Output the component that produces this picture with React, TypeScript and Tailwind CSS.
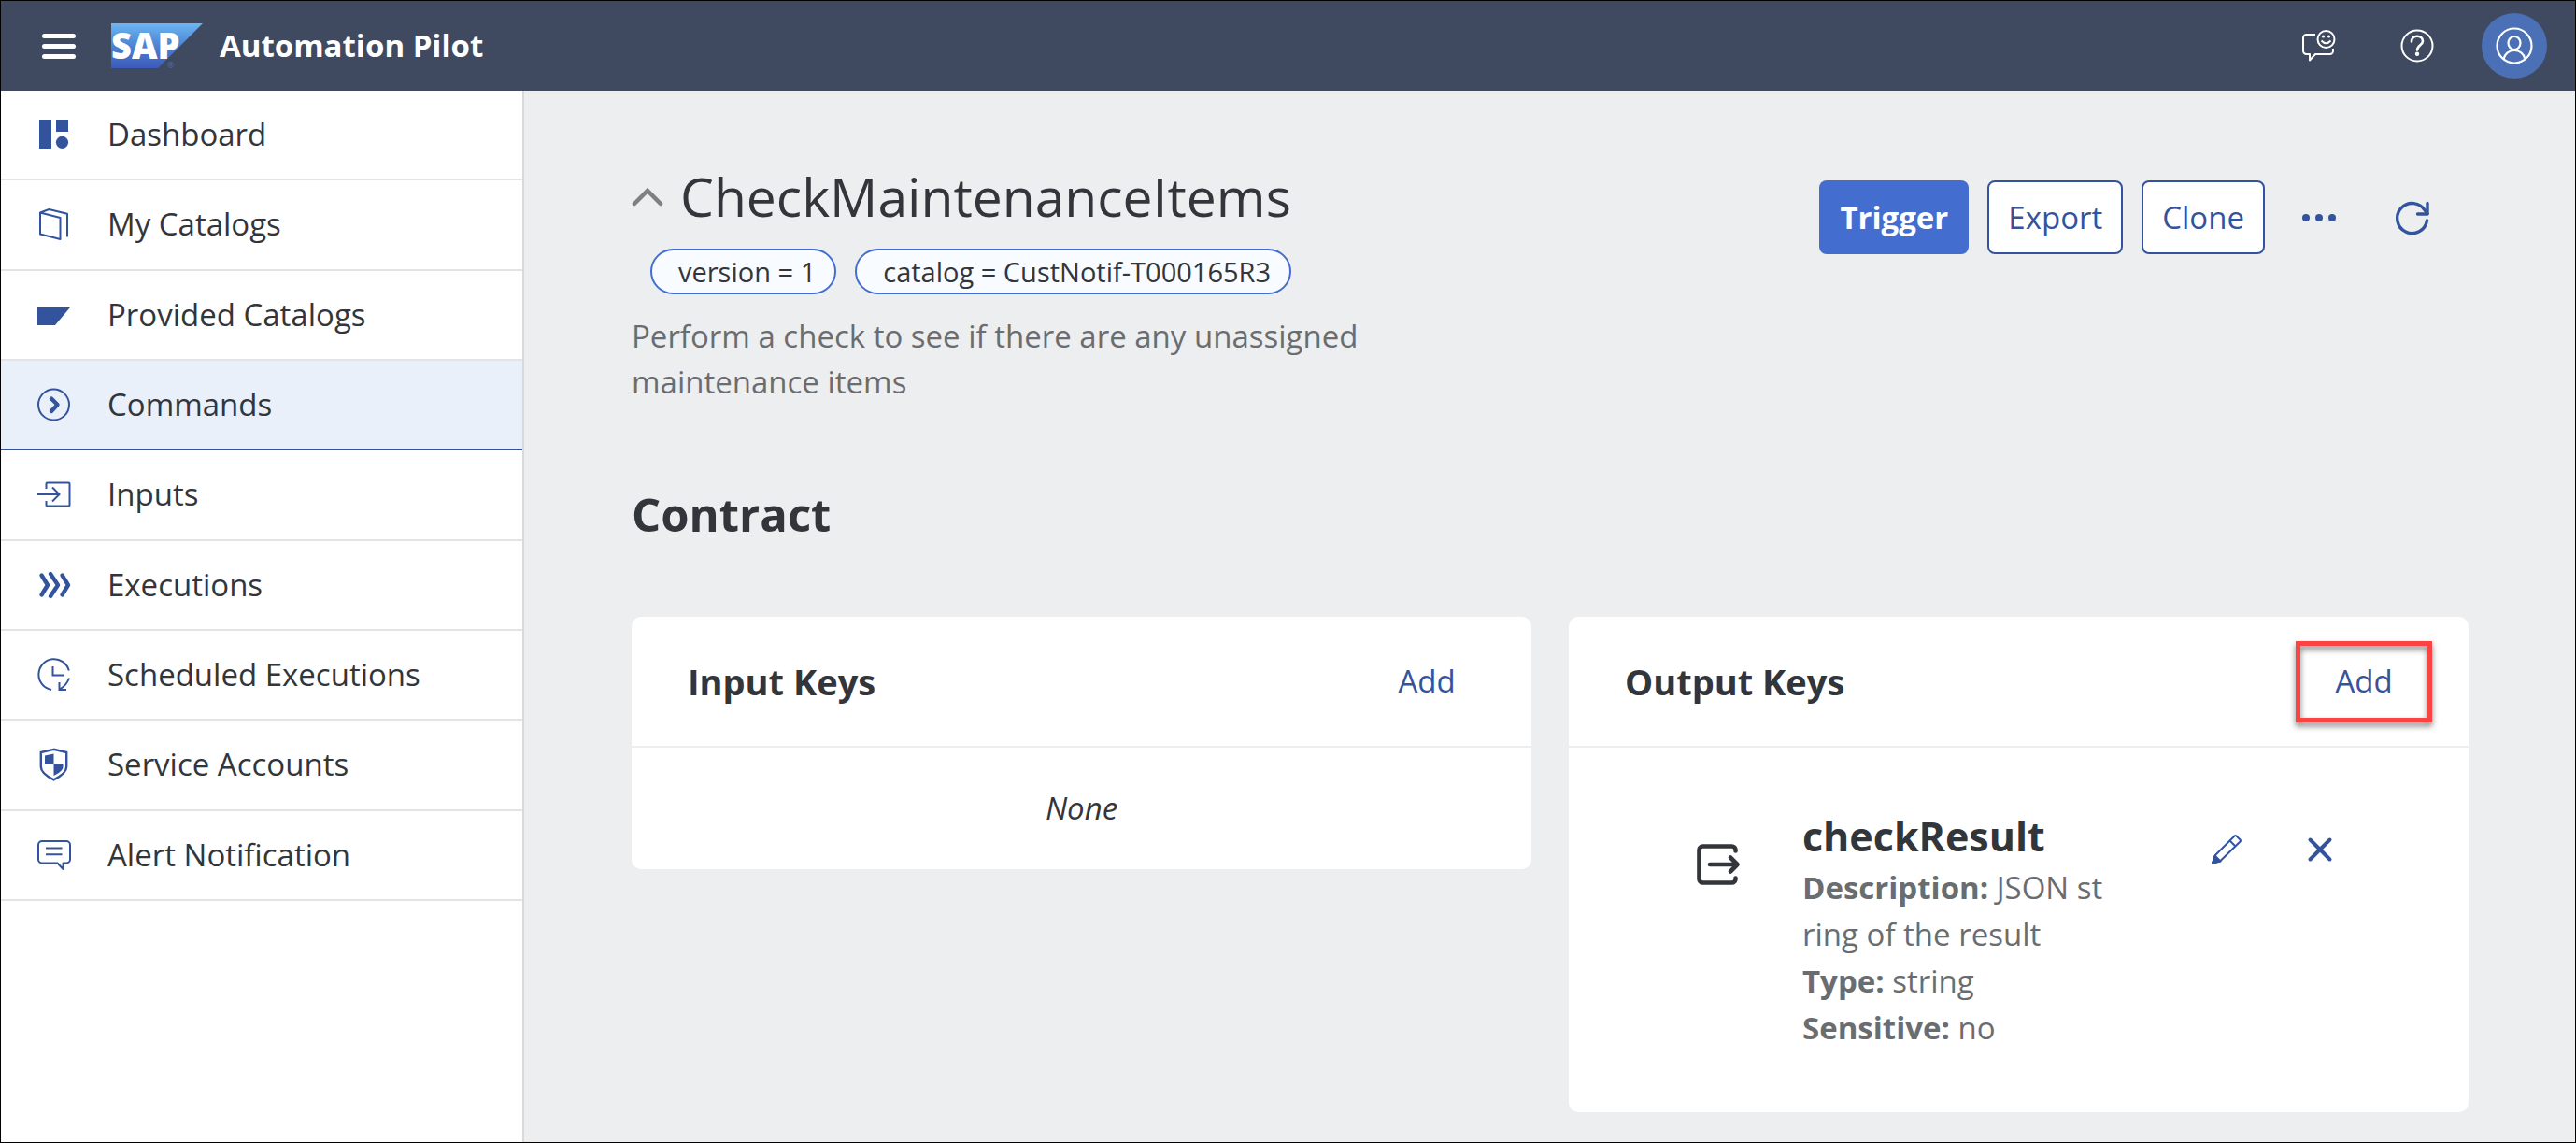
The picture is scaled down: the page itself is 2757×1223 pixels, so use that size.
import type { ReactNode } from "react";

function Icon({ children }: { children: ReactNode }) {
  return (
    <svg
      viewBox="0 0 36 36"
      className="h-9 w-9 shrink-0"
      fill="none"
      stroke="currentColor"
      strokeWidth="2"
      aria-hidden="true"
    >
      {children}
    </svg>
  );
}

const NAV: { label: string; active?: boolean; icon: ReactNode }[] = [
  {
    label: "Dashboard",
    icon: (
      <g fill="currentColor" stroke="none">
        <rect x="2" y="2" width="13" height="31" />
        <rect x="20" y="2" width="13" height="13" />
        <circle cx="26.5" cy="26.3" r="6.6" />
      </g>
    ),
  },
  {
    label: "My Catalogs",
    icon: <path d="M3 5.5 24.5 11v23L3 28.5ZM3 5.5 12.5 2 32 6.8v24.7" strokeLinejoin="round" />,
  },
  {
    label: "Provided Catalogs",
    icon: <path d="M0 10h35L19 29H0Z" fill="currentColor" stroke="none" />,
  },
  {
    label: "Commands",
    active: true,
    icon: (
      <>
        <circle cx="17.5" cy="18" r="16.5" />
        <path d="m15 11.5 6.5 6.5-6.5 7" strokeWidth="4.4" strokeLinecap="round" strokeLinejoin="round" />
      </>
    ),
  },
  {
    label: "Inputs",
    icon: (
      <>
        <path d="M9.5 12V6.5a1 1 0 0 1 1-1h23a1 1 0 0 1 1 1v23a1 1 0 0 1-1 1h-23a1 1 0 0 1-1-1V25" />
        <path d="M0 18h23M16 10.5l7.5 7.5-7.5 7.5" />
      </>
    ),
  },
  {
    label: "Executions",
    icon: (
      <path
        d="m4.500 7.500 6.500 10.500-6.500 10.500M14 6l8 12-8 12M26.500 7.500 33 18l-6.500 10.500"
        strokeWidth="4.4"
        strokeLinecap="round"
        strokeLinejoin="round"
      />
    ),
  },
  {
    label: "Scheduled Executions",
    icon: (
      <>
        <path d="M15 34A16.500 16.500 0 1 1 33.800 13.500" />
        <path d="M16.500 9v9.500H29" />
        <path d="M34 21.500q-2.500 7.500-10 12M23.500 26v8H31" />
      </>
    ),
  },
  {
    label: "Service Accounts",
    icon: (
      <>
        <path
          d="M17.500 1.800 3.800 5v15.500c0 6.500 7 10.500 13.700 13.800 6.700-3.300 13.700-7.300 13.700-13.800V5Z"
          strokeWidth="2.4"
        />
        <path d="M17.500 6.500v11H8V8.500ZM17.500 17.500h10v3c0 4-5 7-10 9.500Z" fill="currentColor" stroke="none" />
      </>
    ),
  },
  {
    label: "Alert Notification",
    icon: (
      <>
        <path
          d="M5 3h26a4 4 0 0 1 4 4v15.500a4 4 0 0 1-4 4h-3.500V33l-6-6.500H5a4 4 0 0 1-4-4V7a4 4 0 0 1 4-4Z"
          strokeLinejoin="round"
        />
        <path d="M9 10.500h17.500M9 17.200h17.500" />
      </>
    ),
  },
];

function SapLogo() {
  return (
    <svg viewBox="0 -4 98 56" className="h-14 w-[98px] shrink-0" role="img" aria-label="SAP">
      <defs>
        <linearGradient id="sap-gradient" x1="0" y1="0" x2="0" y2="1">
          <stop offset="0" stopColor="#6cb6f2" />
          <stop offset="0.5" stopColor="#4c83d2" />
          <stop offset="1" stopColor="#3c5abb" />
        </linearGradient>
      </defs>
      <path d="M0 0h98L50 48H0Z" fill="url(#sap-gradient)" />
      <text x="0" y="38" fontFamily="Open Sans, sans-serif" fontSize="38" fontWeight="800" fill="#fff">
        SAP
      </text>
      <text x="60" y="48" fontFamily="Open Sans, sans-serif" fontSize="9" fill="#4a6cc4">
        ®
      </text>
    </svg>
  );
}

function Card({ title, highlighted, children }: { title: string; highlighted?: boolean; children: ReactNode }) {
  return (
    <section className="rounded-[10px] bg-white">
      <div className="flex h-[140px] items-center justify-between border-b-2 border-[#edeeef] pr-[39px] pl-[60px]">
        <h3 className="text-[38px] leading-[52px] font-bold">{title}</h3>
        <button type="button" className="relative h-[87px] w-[146px] text-[33px] leading-[50px] text-[#33549c]">
          Add
          {highlighted && (
            <span className="absolute inset-0 border-5 border-[#fc4343] drop-shadow-[0_4px_3px_rgba(0,0,0,0.5)]" />
          )}
        </button>
      </div>
      {children}
    </section>
  );
}

function Chip({ children }: { children: ReactNode }) {
  return (
    <span className="rounded-full border-2 border-[#446dd0] bg-[#f8fbff] pr-5 pl-7 text-[29px] leading-[45px]">
      {children}
    </span>
  );
}

export default function App() {
  return (
    <div className="flex min-h-screen flex-col border border-black bg-[#edeef0] font-['Open_Sans',sans-serif] text-[#32363a]">
      <header className="flex h-24 items-center bg-[#3f4a60] pr-[30px] pl-11 text-white">
        <button type="button" aria-label="Menu" className="mr-[38px] flex w-9 flex-col gap-[6px]">
          <span className="h-[5px] rounded-full bg-white" />
          <span className="h-[5px] rounded-full bg-white" />
          <span className="h-[5px] rounded-full bg-white" />
        </button>
        <SapLogo />
        <h1 className="ml-[18px] text-[33px] leading-[50px] font-bold">Automation Pilot</h1>
        <div className="ml-auto flex items-center">
          <button type="button" aria-label="Feedback">
            <Icon>
              <path
                d="M14 6H4.500A3.500 3.500 0 0 0 1 9.500v14A3.500 3.500 0 0 0 4.500 27H8v6.500l6-6.500h15.500a3.500 3.500 0 0 0 3.500-3.500V21"
                strokeLinejoin="round"
              />
              <circle cx="25.5" cy="11" r="9" />
              <path d="M20.500 12.500q5 5.500 10 0" />
              <g fill="currentColor" stroke="none">
                <circle cx="22.5" cy="8" r="1.6" />
                <circle cx="28.5" cy="8" r="1.6" />
              </g>
            </Icon>
          </button>
          <button type="button" aria-label="Help" className="mr-[51px] ml-[69px]">
            <Icon>
              <circle cx="18" cy="18" r="16.5" />
              <path d="M12 13.500c0-7.500 12-7.500 12-.5 0 4-6 4.500-6 9.500" strokeWidth="2.6" strokeLinecap="round" />
              <circle cx="18" cy="26.8" r="2.2" fill="currentColor" stroke="none" />
            </Icon>
          </button>
          <button
            type="button"
            aria-label="User profile"
            className="flex h-[70px] w-[70px] items-center justify-center rounded-full bg-[#4b70b5]"
          >
            <svg viewBox="0 0 40 40" className="h-10 w-10" fill="none" stroke="currentColor" strokeWidth="2.2">
              <circle cx="20" cy="20" r="18.5" />
              <ellipse cx="20" cy="17" rx="6.5" ry="7" />
              <path d="M8.500 34.500c1-5.500 5.500-9.500 11.500-9.500s10.500 4 11.500 9.500" />
            </svg>
          </button>
        </div>
      </header>

      <div className="flex flex-1">
        <nav className="w-[560px] shrink-0 border-r-2 border-[#d9d9d9] bg-white">
          <ul className="grid h-[867px] auto-rows-fr">
            {NAV.map((item) => (
              <li key={item.label}>
                <a
                  href="#"
                  aria-current={item.active ? "page" : undefined}
                  className={`flex h-full items-center gap-[39px] border-b-2 pl-[39px] ${
                    item.active ? "border-[#33549c] bg-[#e9f0fa]" : "border-[#e4e4e4]"
                  }`}
                >
                  <span className="text-[#33549c]">
                    <Icon>{item.icon}</Icon>
                  </span>
                  <span className="text-[33px] leading-[50px]">{item.label}</span>
                </a>
              </li>
            ))}
          </ul>
        </nav>

        <main className="min-w-0 flex-1 pt-[78px] pr-[114px] pb-[30px] pl-[115px]">
          <div className="flex items-start justify-between">
            <div>
              <div className="flex items-center gap-[18px]">
                <button type="button" aria-label="Collapse" className="text-[#808080]">
                  <svg
                    viewBox="0 0 34 22"
                    className="h-[22px] w-[34px]"
                    fill="none"
                    stroke="currentColor"
                    strokeWidth="4.5"
                  >
                    <path d="M3 19 17 5l14 14" strokeLinecap="round" />
                  </svg>
                </button>
                <h2 className="text-[57px] leading-[70px]">CheckMaintenanceItems</h2>
              </div>
              <div className="mt-[21px] flex gap-5 pl-5">
                <Chip>version = 1</Chip>
                <Chip>catalog = CustNotif-T000165R3</Chip>
              </div>
              <p className="mt-5 max-w-[860px] text-[33px] leading-[49px] text-[#6a6d70]">
                Perform a check to see if there are any unassigned maintenance items
              </p>
            </div>
            <div className="mt-[18px] flex items-center gap-5 pr-[42px] text-[33px] leading-[50px] text-[#33549c]">
              <button type="button" className="h-[79px] rounded-[8px] bg-[#446dd0] px-[22px] font-bold text-white">
                Trigger
              </button>
              <button type="button" className="h-[79px] rounded-[8px] border-2 border-[#33549c] bg-white px-5">
                Export
              </button>
              <button type="button" className="h-[79px] rounded-[8px] border-2 border-[#33549c] bg-white px-5">
                Clone
              </button>
              <button type="button" aria-label="More" className="ml-5 flex gap-[6px]">
                <span className="h-2 w-2 rounded-full bg-[#33549c]" />
                <span className="h-2 w-2 rounded-full bg-[#33549c]" />
                <span className="h-2 w-2 rounded-full bg-[#33549c]" />
              </button>
              <button type="button" aria-label="Refresh" className="ml-11">
                <Icon>
                  <g strokeWidth="3.4" strokeLinecap="round" strokeLinejoin="round">
                    <path d="M33.500 21A16 16 0 1 1 31.500 10.500L34 13.500" />
                    <path d="M34 2.500v11.500H23.500" />
                  </g>
                </Icon>
              </button>
            </div>
          </div>

          <h2 className="mt-[87px] text-[49px] leading-[60px] font-bold">Contract</h2>

          <div className="mt-20 grid grid-cols-2 items-start gap-10">
            <Card title="Input Keys">
              <p className="py-10 text-center text-[33px] leading-[50px] italic">None</p>
            </Card>
            <Card title="Output Keys" highlighted>
              <div className="flex items-start py-[65px] pr-[145px] pl-[136px]">
                <svg
                  viewBox="0 0 48 48"
                  className="mt-9 mr-[66px] h-12 w-12 shrink-0"
                  fill="none"
                  stroke="currentColor"
                  strokeWidth="4.6"
                  strokeLinecap="round"
                  strokeLinejoin="round"
                  aria-hidden="true"
                >
                  <path d="M42.500 9.500V8.500a4 4 0 0 0-4-4H7.500a4 4 0 0 0-4 4v31a4 4 0 0 0 4 4h31a4 4 0 0 0 4-4v-1" />
                  <path d="M15 24h29M37 16.500l7.500 7.500-7.500 7.500" />
                </svg>
                <div className="mr-[110px] min-w-0 flex-1">
                  <h4 className="text-[43px] leading-[60px] font-bold">checkResult</h4>
                  <div className="text-[33px] leading-[50px] break-all text-[#6a6d70]">
                    <p>
                      <b>Description:</b> JSON string of the result
                    </p>
                    <p>
                      <b>Type:</b> string
                    </p>
                    <p>
                      <b>Sensitive:</b> no
                    </p>
                  </div>
                </div>
                <button type="button" aria-label="Edit" className="mt-7 mr-[70px] text-[#33549c]">
                  <svg
                    viewBox="0 0 32 32"
                    className="h-8 w-8"
                    fill="none"
                    stroke="currentColor"
                    strokeWidth="2"
                    strokeLinejoin="round"
                  >
                    <path d="M1 30.500 4 22 24.500 1.500q1-1 2 0L30.500 5.500q1 1 0 2L9 28.500Z" />
                    <path d="m19.500 6.500 6 6" />
                    <path d="M1 30.500 3.500 22.500l6 6Z" fill="currentColor" />
                  </svg>
                </button>
                <button type="button" aria-label="Remove" className="mt-[30px] text-[#33549c]">
                  <svg viewBox="0 0 28 28" className="h-7 w-7" fill="none" stroke="currentColor" strokeWidth="4">
                    <path d="M3.500 3.500l21 21M24.500 3.500l-21 21" strokeLinecap="round" />
                  </svg>
                </button>
              </div>
            </Card>
          </div>
        </main>
      </div>
    </div>
  );
}
